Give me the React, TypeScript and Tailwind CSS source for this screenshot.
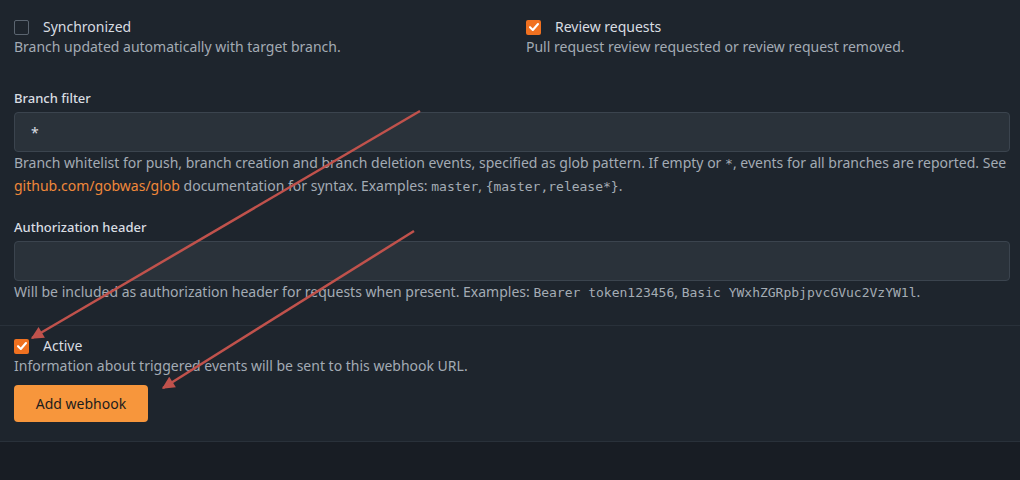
import React from "react";

const sans = "font-['Noto_Sans','Open_Sans',sans-serif]";
const mono = "font-['DejaVu_Sans_Mono','Liberation_Mono',monospace] text-[13px] leading-none text-[#a4acb4]";

function Check({ checked }: { checked: boolean }) {
  if (checked) {
    return (
      <span className="flex h-[15px] w-[15px] shrink-0 items-center justify-center rounded-[2px] bg-[#f07120]">
        <svg width="12" height="12" viewBox="0 0 12 12" fill="none">
          <path d="M2 6.2 L4.8 9 L10 3" stroke="#ffffff" strokeWidth="2.1" strokeLinecap="round" strokeLinejoin="round" />
        </svg>
      </span>
    );
  }
  return <span className="block h-[15px] w-[15px] shrink-0 rounded-[2px] border border-[#5b6570] bg-transparent" />;
}

function CheckField({ checked, label, desc }: { checked: boolean; label: string; desc: string }) {
  return (
    <div>
      <div className="flex h-[20px] items-center">
        <Check checked={checked} />
        <span className="ml-[14px] text-[14px] leading-[20px] text-[#d9dde2]">{label}</span>
      </div>
      <div className="text-[14px] leading-[20px] text-[#a3abb4]">{desc}</div>
    </div>
  );
}

export default function App() {
  return (
    <div className={`relative h-[480px] w-full overflow-hidden bg-[#181d24] ${sans}`}>
      <div className="border-b border-[#29313a] bg-[#1e252d]">
        <div className="pl-[14px] pr-[10px] pt-[17px] pb-[22px]">
          <div className="grid grid-cols-[512px_1fr]">
            <CheckField checked={false} label="Synchronized" desc="Branch updated automatically with target branch." />
            <CheckField checked={true} label="Review requests" desc="Pull request review requested or review request removed." />
          </div>

          <div className="mt-[31px] text-[13px] font-medium leading-[20px] text-[#d9dde2]">Branch filter</div>
          <div className="mt-[4px] flex h-[40px] items-center rounded-[4px] border border-[#3b444e] bg-[#2a323a] px-[16px] text-[14px] text-[#d9dde2]">
            *
          </div>
          <div className="mt-[-1px] mr-[-6px] text-[14px] leading-[23px] text-[#a3abb4]">
            Branch whitelist for push, branch creation and branch deletion events, specified as glob pattern. If empty or{" "}
            <code className={mono}>*</code>, events for all branches are reported. See{" "}
            <span className="text-[#f0883a]">github.com/gobwas/glob</span> documentation for syntax. Examples:{" "}
            <code className={mono}>master</code>, <code className={mono}>{"{master,release*}"}</code>.
          </div>

          <div className="mt-[20px] text-[13px] font-medium leading-[20px] text-[#d9dde2]">Authorization header</div>
          <div className="mt-[4px] h-[40px] rounded-[4px] border border-[#3b444e] bg-[#2a323a]" />
          <div className="mt-[-1px] text-[14px] leading-[23px] text-[#a3abb4]">
            Will be included as authorization header for requests when present. Examples:{" "}
            <code className={mono}>Bearer token123456</code>, <code className={mono}>Basic YWxhZGRpbjpvcGVuc2VzYW1l</code>.
          </div>
        </div>

        <div className="h-px bg-[#29313a]" />

        <div className="px-[14px] pt-[10px] pb-[19px]">
          <CheckField checked={true} label="Active" desc="Information about triggered events will be sent to this webhook URL." />
          <button className="mt-[9px] flex h-[37px] w-[134px] items-center justify-center rounded-[4px] bg-[#f7963c] text-[14px] text-[#1c1c1c]">
            Add webhook
          </button>
        </div>
      </div>

      <svg className="pointer-events-none absolute inset-0" width="1020" height="480" viewBox="0 0 1020 480">
        <defs>
          <marker id="ah" viewBox="0 0 10 10" refX="9" refY="5" markerWidth="6.5" markerHeight="5" orient="auto" markerUnits="strokeWidth">
            <path d="M0 0 L10 5 L0 10 Z" fill="#c0524c" />
          </marker>
        </defs>
        <line x1="420" y1="111" x2="32" y2="338" stroke="#c0524c" strokeWidth="2.5" markerEnd="url(#ah)" />
        <line x1="414" y1="231" x2="163" y2="388" stroke="#c0524c" strokeWidth="2.5" markerEnd="url(#ah)" />
      </svg>
    </div>
  );
}
